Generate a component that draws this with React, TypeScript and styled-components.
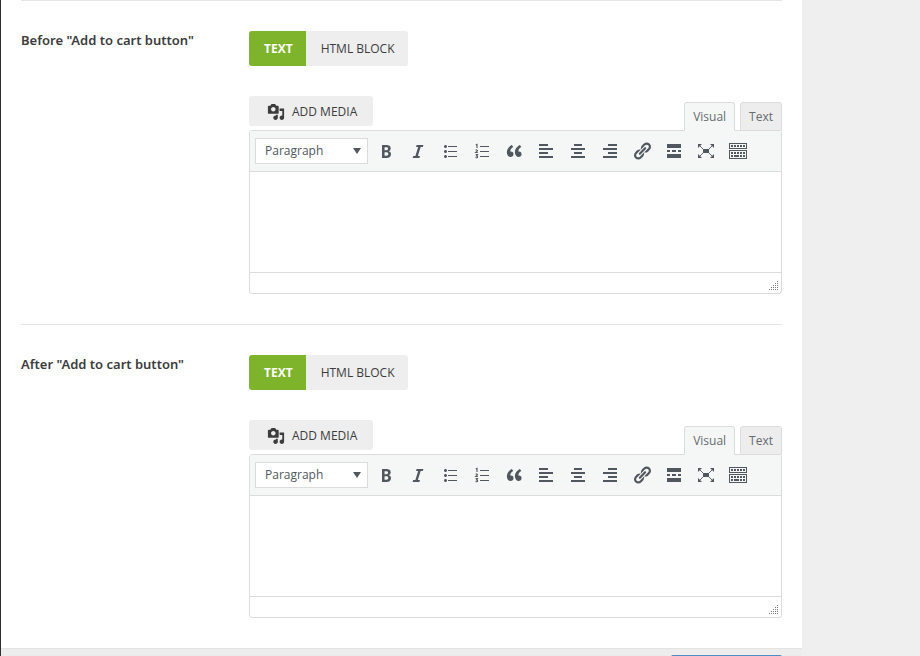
import React from "react";
import styled, { createGlobalStyle, css } from "styled-components";

const GlobalStyle = createGlobalStyle`
  *, *::before, *::after { box-sizing: border-box; }
  html, body { margin: 0; }
  body {
    background: #efefef;
    color: #3c3c3c;
    font-family: "Open Sans", "Noto Sans", sans-serif;
    font-size: 13px;
    line-height: 18px;
  }
  button, select, textarea { font: inherit; color: inherit; margin: 0; }
`;

const Page = styled.div`
  display: flex;
  min-height: 100vh;
  overflow: hidden;
  max-height: 100vh;
`;

const Panel = styled.main`
  flex: 1;
  min-width: 0;
  border-left: 1px solid #2f2f31;
  background: #fff;
`;

const Gutter = styled.aside`
  flex: 0 0 118px;
  background: #efefef;
`;

const Field = styled.section`
  display: flex;
  margin: 0 20px;
  padding: 30px 0;
  border-top: 1px solid #e5e5e5;
`;

const FieldTitle = styled.h2`
  flex: 0 0 228px;
  margin: 0;
  font-family: "Noto Sans", "Open Sans", sans-serif;
  font-size: 13px;
  line-height: 18px;
  font-weight: 600;
`;

const FieldBody = styled.div`
  flex: 1;
  min-width: 0;
`;

const Switch = styled.div`
  display: flex;
  margin-bottom: 30px;
`;

const SwitchButton = styled.button<{ $active?: boolean }>`
  height: 35px;
  padding: 0 13px 0 15px;
  border: 0;
  font-size: 12px;
  font-weight: 500;
  background: #eee;
  &:first-child { border-radius: 3px 0 0 3px; }
  &:last-child { border-radius: 0 3px 3px 0; }
  ${(p) =>
    p.$active &&
    css`
      background: #7eb42c;
      color: #fff;
      font-weight: 700;
    `}
`;

const EditorTop = styled.div`
  display: flex;
  justify-content: space-between;
  align-items: flex-start;
  height: 34px;
`;

const MediaButton = styled.button`
  display: flex;
  align-items: center;
  gap: 7px;
  height: 30px;
  padding: 1px 16px 0 18px;
  border: 0;
  border-radius: 3px;
  background: #eee;
  font-size: 12px;
  font-weight: 500;
`;

const Tabs = styled.div`
  display: flex;
  gap: 5px;
  padding-top: 6px;
`;

const Tab = styled.button<{ $active?: boolean }>`
  position: relative;
  height: 29px;
  padding: 0 8px;
  border: 1px solid #dcdcdc;
  border-bottom-color: ${(p) => (p.$active ? "#f5f7f7" : "#dcdcdc")};
  border-radius: 3px 3px 0 0;
  background: ${(p) => (p.$active ? "#f5f7f7" : "#ededed")};
  color: #666b70;
  font-size: 12px;
`;

const Editor = styled.div`
  border: 1px solid #dcdcdc;
  border-radius: 3px;
  background: #fff;
`;

const Toolbar = styled.div`
  display: flex;
  align-items: center;
  height: 41px;
  padding: 0 5px;
  border-bottom: 1px solid #dcdcdc;
  background: #f5f7f7;
`;

const FormatWrap = styled.div`
  display: grid;
  flex: 0 0 113px;
  align-items: center;
  margin-right: 4px;
  & > * { grid-area: 1 / 1; }
  & > svg { justify-self: end; margin-right: 7px; pointer-events: none; }
`;

const Format = styled.select`
  appearance: none;
  width: 100%;
  height: 26px;
  padding: 0 24px 0 9px;
  border: 1px solid #dcdcdc;
  border-radius: 0;
  background: #fff;
  color: #50575e;
  font-size: 12px;
`;

const Tools = styled.div`
  display: flex;
  gap: 4px;
`;

const Tool = styled.button`
  display: grid;
  place-items: center;
  width: 28px;
  height: 28px;
  padding: 0;
  border: 0;
  background: none;
  color: #50575e;
`;

const Content = styled.textarea`
  display: block;
  width: 100%;
  height: 100px;
  padding: 9px 10px;
  border: 0;
  outline: 0;
  resize: none;
  background: transparent;
`;

const StatusBar = styled.div`
  display: flex;
  justify-content: flex-end;
  align-items: flex-end;
  height: 21px;
  padding: 0 3px 3px 0;
  border-top: 1px solid #dcdcdc;
`;

const Footer = styled.footer`
  display: flex;
  justify-content: flex-end;
  padding: 6px 20px;
  border-top: 1px solid #e3e3e3;
  background: #ededed;
`;

const SaveButton = styled.button`
  width: 111px;
  height: 36px;
  border: 0;
  border-radius: 2px;
  background: #4f8cc4;
  color: #fff;
`;

const bullets =
  "M5.5 7C4.67 7 4 6.33 4 5.5 4 4.68 4.67 4 5.5 4 6.32 4 7 4.68 7 5.5 7 6.33 6.32 7 5.5 7zM8 5h9v1H8V5zm-2.5 7c-.83 0-1.5-.67-1.5-1.5C4 9.68 4.67 9 5.5 9c.82 0 1.5.68 1.5 1.5 0 .83-.68 1.5-1.5 1.5zM8 10h9v1H8v-1zm-2.5 7c-.83 0-1.5-.67-1.5-1.5 0-.82.67-1.5 1.5-1.5.82 0 1.5.68 1.5 1.5 0 .83-.68 1.5-1.5 1.5zM8 15h9v1H8v-1z";

const numberMarks = (
  <>
    <path d="M8 5h9v1H8zM8 10h9v1H8zM8 15h9v1H8z" />
    <path
      d="M3.8 4.1 5 3.5V7M3.7 9.3c.5-.6 1.8-.5 1.8.3 0 .7-.9 1.2-1.7 1.9h2M3.7 13.6h1.8L4.6 15c1.4 0 1.4 1.8 0 1.8-.4 0-.7-.1-1-.3"
      fill="none"
      stroke="currentColor"
      strokeWidth="1.1"
    />
  </>
);

const tools: { label: string; art: React.ReactNode }[] = [
  {
    label: "Bold",
    art: (
      <path d="M6 4v13h4.54c1.37 0 2.46-.33 3.26-1 .8-.66 1.2-1.58 1.2-2.77 0-.84-.17-1.51-.51-2.01s-.9-.85-1.67-1.03v-.09c.57-.1 1.02-.4 1.36-.9s.51-1.13.51-1.91c0-1.14-.39-1.98-1.17-2.5C12.75 4.26 11.5 4 9.78 4H6zm2.57 5.15V6.26h1.36c.73 0 1.27.11 1.61.32.34.22.51.58.51 1.07 0 .54-.16.92-.47 1.15s-.82.35-1.51.35h-1.5zm0 2.19h1.6c1.44 0 2.16.53 2.16 1.61 0 .6-.17 1.05-.51 1.34s-.86.43-1.57.43H8.57v-3.38z" />
    ),
  },
  { label: "Italic", art: <path d="M14.78 6h-2.13l-2.8 9h2.12l-.62 2H4.6l.62-2h2.14l2.8-9H8.03l.62-2h6.75z" /> },
  { label: "Bulleted list", art: <path d={bullets} /> },
  { label: "Numbered list", art: numberMarks },
  {
    label: "Blockquote",
    art: (
      <path d="M9.49 13.22c0-.74-.2-1.38-.61-1.9-.62-.78-1.83-.88-2.53-.72-.29-1.65 1.11-3.75 2.92-4.65L7.88 4c-2.73 1.3-5.42 4.28-4.96 8.05C3.21 14.43 4.59 16 6.54 16c.85 0 1.56-.25 2.12-.75s.83-1.18.83-2.03zm8.05 0c0-.74-.2-1.38-.61-1.9-.63-.78-1.83-.88-2.53-.72-.29-1.65 1.11-3.75 2.92-4.65L15.93 4c-2.73 1.3-5.41 4.28-4.95 8.05.29 2.38 1.66 3.95 3.61 3.95.85 0 1.56-.25 2.12-.75s.83-1.18.83-2.03z" />
    ),
  },
  { label: "Align left", art: <path d="M3 3h9v2H3zM3 7h14v2H3zM3 11h9v2H3zM3 15h14v2H3z" /> },
  { label: "Align center", art: <path d="M6 3h8v2H6zM3 7h14v2H3zM6 11h8v2H6zM3 15h14v2H3z" /> },
  { label: "Align right", art: <path d="M8 3h9v2H8zM3 7h14v2H3zM8 11h9v2H8zM3 15h14v2H3z" /> },
  {
    label: "Insert link",
    art: (
      <path d="M17.74 2.76c1.68 1.69 1.68 4.41 0 6.1l-1.53 1.52c-1.12 1.12-2.7 1.47-4.14 1.09l2.62-2.61.76-.77.76-.76c.84-.84.84-2.2 0-3.04-.84-.85-2.2-.85-3.04 0l-.77.76-3.38 3.38c-.37-1.44-.02-3.02 1.1-4.14l1.52-1.53c1.69-1.68 4.42-1.68 6.1 0zM8.59 13.43l5.34-5.34c.42-.42.42-1.1 0-1.52-.44-.43-1.13-.39-1.53 0l-5.33 5.34c-.42.42-.42 1.1 0 1.52.44.43 1.13.39 1.52 0zm-.76 2.29l4.14-4.15c.38 1.44.03 3.02-1.09 4.14l-1.52 1.53c-1.69 1.68-4.41 1.68-6.1 0-1.68-1.68-1.68-4.42 0-6.1l1.53-1.52c1.12-1.12 2.7-1.47 4.14-1.1l-4.14 4.15c-.85.84-.85 2.2 0 3.05.84.84 2.2.84 3.04 0z" />
    ),
  },
  { label: "Read more tag", art: <path d="M3 3h14v4H3zM3 9h3v2H3zM8 9h4v2H8zM14 9h3v2h-3zM3 13h14v4H3z" /> },
  {
    label: "Distraction-free writing",
    art: (
      <>
        <path d="M7 8h6v4H7zM2 3h4L2 7zM18 3h-4l4 4zM2 17h4l-4-4zM18 17h-4l4-4z" />
        <path d="m3 4 5 5M17 4l-5 5M3 16l5-5M17 16l-5-5" stroke="currentColor" strokeWidth="0.9" />
      </>
    ),
  },
  {
    label: "Toolbar toggle",
    art: (
      <path
        fillRule="evenodd"
        d="M1 2h18v6H1zM2 3v4h16V3zM1 9h18v9H1zM2 10v7h16v-7zM3 4h2v2H3zM6 4h2v2H6zM9 4h2v2H9zM12 4h2v2h-2zM15 4h2v2h-2zM3 11h2v2H3zM6 11h2v2H6zM9 11h2v2H9zM12 11h2v2h-2zM15 11h2v2h-2zM3 14h2v2H3zM6 14h5v2H6zM12 14h2v2h-2zM15 14h2v2h-2z"
      />
    ),
  },
];

const MediaIcon = () => (
  <svg width="18" height="18" viewBox="0 0 20 20" fill="currentColor" aria-hidden="true">
    <path d="M13 11V4c0-.55-.45-1-1-1h-1.67L9 1H5L3.67 3H2c-.55 0-1 .45-1 1v7c0 .55.45 1 1 1h10c.55 0 1-.45 1-1zM7 4.5c1.38 0 2.5 1.12 2.5 2.5S8.38 9.5 7 9.5 4.5 8.38 4.5 7 5.62 4.5 7 4.5zM14 6h5v10.5c0 1.38-1.12 2.5-2.5 2.5S14 17.88 14 16.5s1.12-2.5 2.5-2.5c.17 0 .34.02.5.05V9h-3V6zm-4 8.05V13h2v3.5c0 1.38-1.12 2.5-2.5 2.5S7 17.88 7 16.5 8.12 14 9.5 14c.17 0 .34.02.5.05z" />
  </svg>
);

const ResizeGrip = () => (
  <svg width="10" height="10" viewBox="0 0 10 10" fill="#7c7c7c" shapeRendering="crispEdges" aria-hidden="true">
    {[0, 1, 2, 3, 4].flatMap((row) =>
      Array.from({ length: row + 1 }, (_, i) => (
        <rect key={`${row}-${i}`} x={9 - i * 2} y={row * 2 + 1} width="1" height="1" />
      ))
    )}
  </svg>
);

function EditorField({ title }: { title: string }) {
  return (
    <Field>
      <FieldTitle>{title}</FieldTitle>
      <FieldBody>
        <Switch role="group" aria-label={title}>
          <SwitchButton type="button" $active aria-pressed="true">TEXT</SwitchButton>
          <SwitchButton type="button" aria-pressed="false">HTML BLOCK</SwitchButton>
        </Switch>
        <EditorTop>
          <MediaButton type="button">
            <MediaIcon />
            ADD MEDIA
          </MediaButton>
          <Tabs>
            <Tab type="button" $active>Visual</Tab>
            <Tab type="button">Text</Tab>
          </Tabs>
        </EditorTop>
        <Editor>
          <Toolbar role="toolbar" aria-label="Formatting">
            <FormatWrap>
              <Format aria-label="Text format" defaultValue="Paragraph">
                <option>Paragraph</option>
              </Format>
              <svg width="8" height="6" viewBox="0 0 8 6" fill="#50575e" aria-hidden="true">
                <path d="M0 0h8L4 6z" />
              </svg>
            </FormatWrap>
            <Tools>
              {tools.map((tool) => (
                <Tool key={tool.label} type="button" aria-label={tool.label}>
                  <svg width="20" height="20" viewBox="0 0 20 20" fill="currentColor" aria-hidden="true">
                    {tool.art}
                  </svg>
                </Tool>
              ))}
            </Tools>
          </Toolbar>
          <Content aria-label={title} />
          <StatusBar>
            <ResizeGrip />
          </StatusBar>
        </Editor>
      </FieldBody>
    </Field>
  );
}

export default function App() {
  return (
    <>
      <GlobalStyle />
      <Page>
        <Panel>
          <EditorField title={'Before "Add to cart button"'} />
          <EditorField title={'After "Add to cart button"'} />
          <Footer>
            <SaveButton type="button" aria-label="Save" />
          </Footer>
        </Panel>
        <Gutter />
      </Page>
    </>
  );
}
